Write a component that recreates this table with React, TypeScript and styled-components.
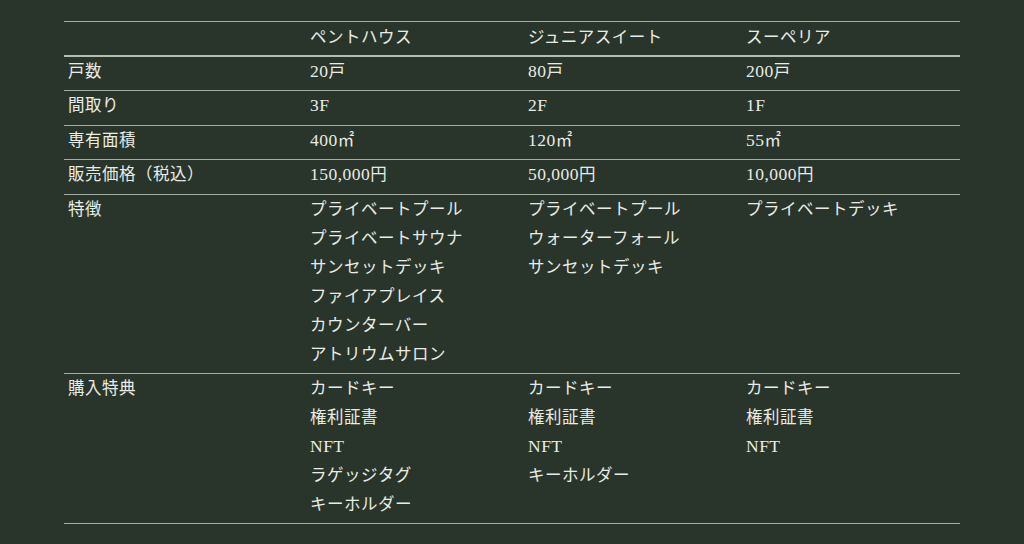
import styled, { createGlobalStyle } from 'styled-components';

const GlobalStyle = createGlobalStyle`
    html, body {
        margin: 0;
        padding: 0;
        background-color: #29352a;
    }
    body {
        width: 1024px;
        height: 544px;
        overflow: hidden;
        font-family: "Liberation Serif", "Noto Sans CJK JP", serif;
    }
`;

const Page = styled.div`
    width: 1024px;
    height: 544px;
    background-color: #29352a;
    padding-top: 21px;
    box-sizing: border-box;
`;

const Table = styled.table`
    width: 896px;
    margin: 0 auto;
    border-collapse: collapse;
    table-layout: fixed;
    color: #e9ece6;
    font-size: 16.5px;
    letter-spacing: 0.03em;
    border-top: 1px solid #a3afa0;
`;

const Row = styled.tr<{ $head?: boolean }>`
    border-bottom: ${(p) => (p.$head ? '2px solid #b3bdb0' : '1px solid #a3afa0')};
`;

const Cell = styled.td<{ $head?: boolean }>`
    padding: ${(p) => (p.$head ? '1px 4px 2px' : '0 4px 4px')};
    line-height: 29.5px;
    vertical-align: top;
    text-align: left;
    font-weight: 400;
`;

const Latin = styled.span`
    font-size: 17.5px;
    line-height: 1;
`;

const Item = styled.div`
    line-height: 29px;
    white-space: nowrap;
`;

const columns = ['ペントハウス', 'ジュニアスイート', 'スーペリア'];

type RowData = { label: string; values: (string | string[])[] };

const rows: RowData[] = [
    { label: '戸数', values: ['20戸', '80戸', '200戸'] },
    { label: '間取り', values: ['3F', '2F', '1F'] },
    { label: '専有面積', values: ['400㎡', '120㎡', '55㎡'] },
    { label: '販売価格（税込）', values: ['150,000円', '50,000円', '10,000円'] },
    {
        label: '特徴',
        values: [
            ['プライベートプール', 'プライベートサウナ', 'サンセットデッキ', 'ファイアプレイス', 'カウンターバー', 'アトリウムサロン'],
            ['プライベートプール', 'ウォーターフォール', 'サンセットデッキ'],
            ['プライベートデッキ'],
        ],
    },
    {
        label: '購入特典',
        values: [
            ['カードキー', '権利証書', 'NFT', 'ラゲッジタグ', 'キーホルダー'],
            ['カードキー', '権利証書', 'NFT', 'キーホルダー'],
            ['カードキー', '権利証書', 'NFT'],
        ],
    },
];

// split latin runs (digits, letters) from japanese so they can be sized up a little
const renderText = (text: string) =>
    text.split(/([0-9A-Za-z,.]+)/).map((part, i) =>
        /^[0-9A-Za-z,.]+$/.test(part) ? <Latin key={i}>{part}</Latin> : part
    );

export default function App() {
    return (
        <>
            <GlobalStyle />
            <Page>
                <Table>
                    <colgroup>
                        <col style={{ width: 242 }} />
                        <col style={{ width: 218 }} />
                        <col style={{ width: 218 }} />
                        <col style={{ width: 218 }} />
                    </colgroup>
                    <thead>
                        <Row $head>
                            <Cell as="th" $head />
                            {columns.map((c) => (
                                <Cell as="th" $head key={c}>{c}</Cell>
                            ))}
                        </Row>
                    </thead>
                    <tbody>
                        {rows.map((r) => (
                            <Row key={r.label}>
                                <Cell>{r.label}</Cell>
                                {r.values.map((v, i) => (
                                    <Cell key={i}>
                                        {Array.isArray(v)
                                            ? v.map((item) => <Item key={item}>{renderText(item)}</Item>)
                                            : renderText(v)}
                                    </Cell>
                                ))}
                            </Row>
                        ))}
                    </tbody>
                </Table>
            </Page>
        </>
    );
}
